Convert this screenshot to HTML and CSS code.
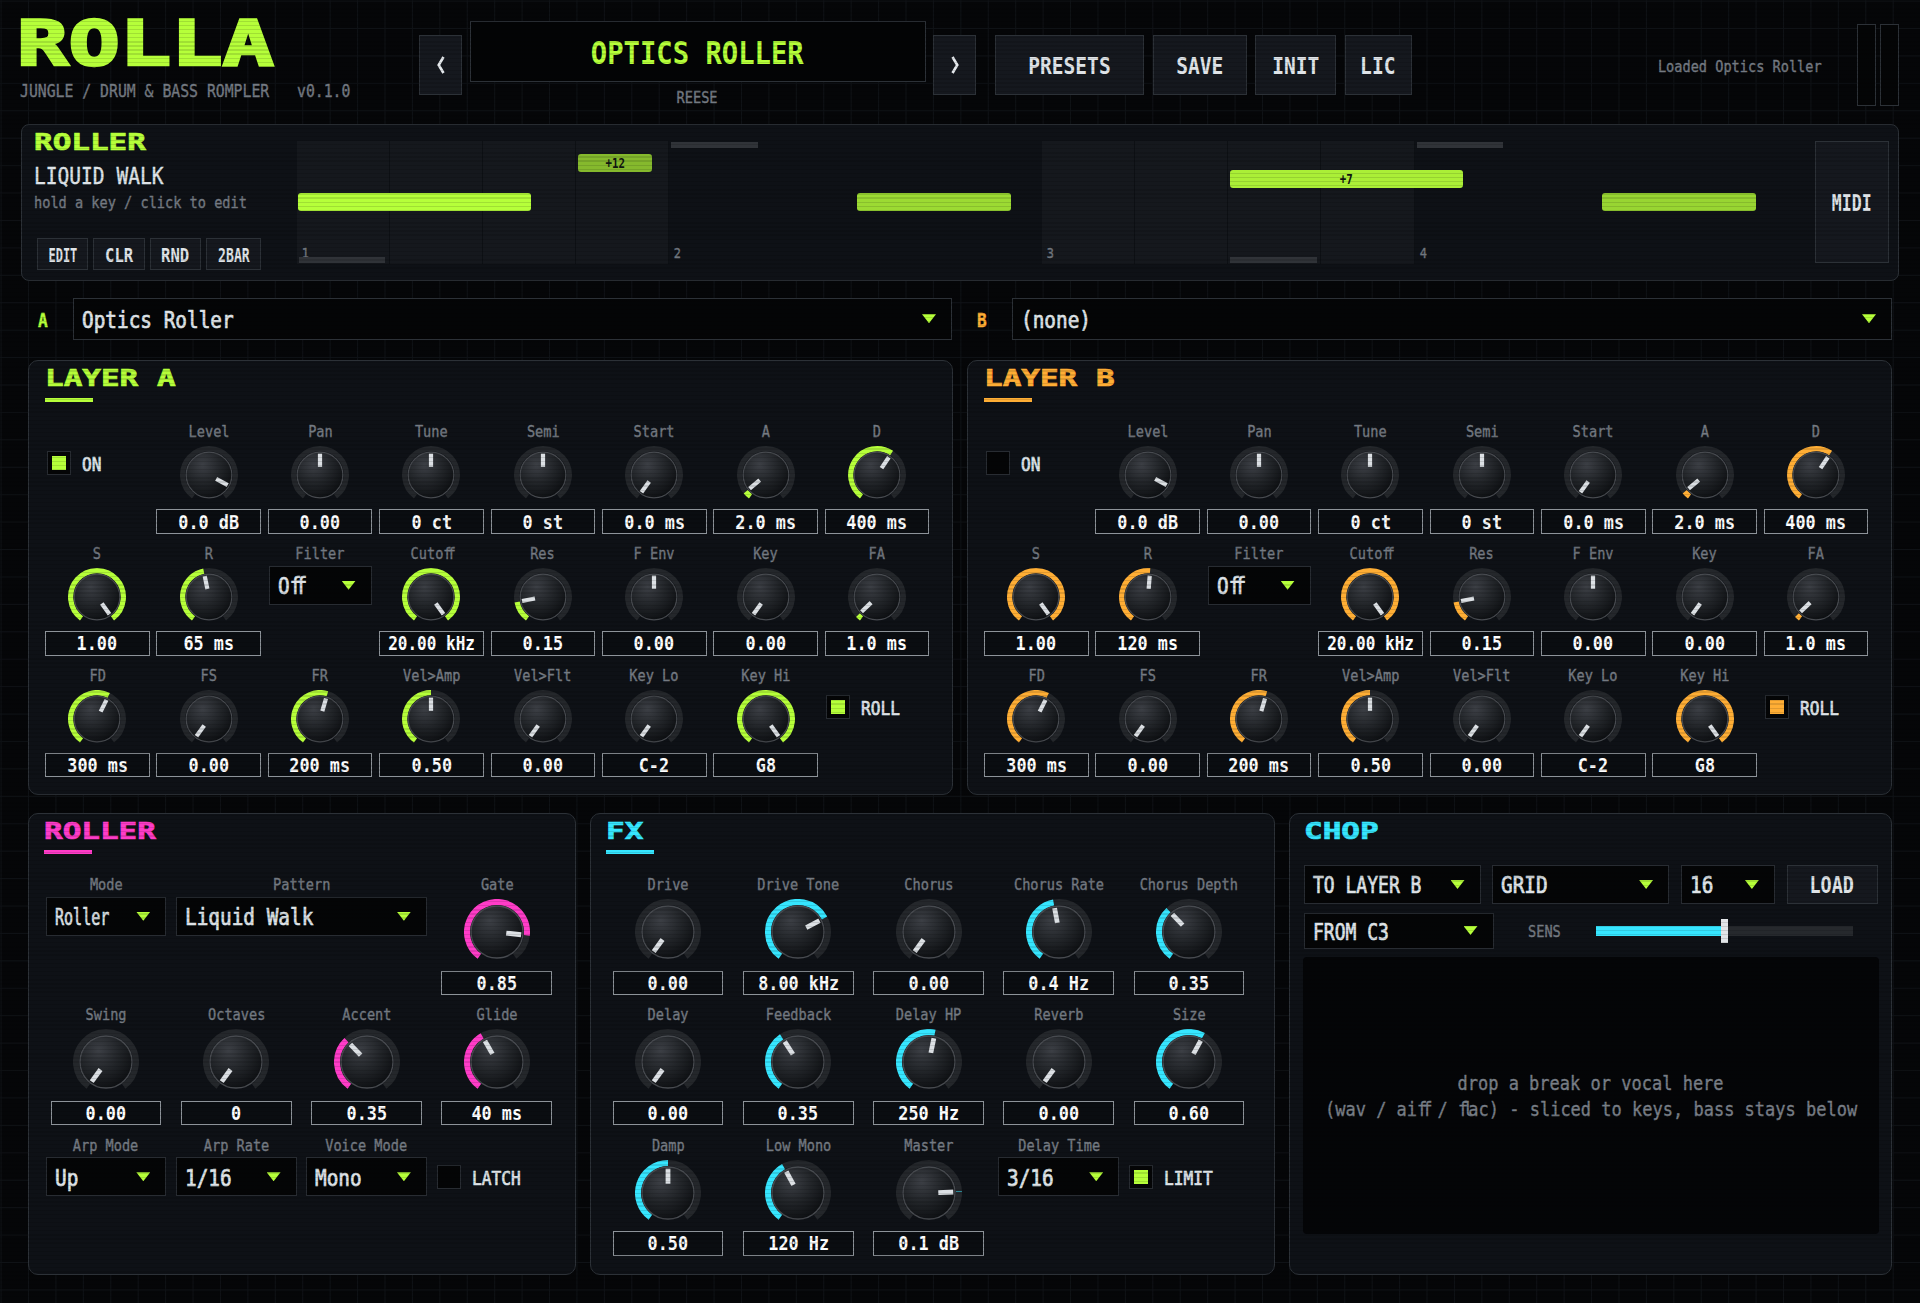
FILE: index.html
```html
<!DOCTYPE html>
<html lang="en">
<head>
  <meta charset="UTF-8">
  <meta name="viewport" content="width=device-width, initial-scale=1.0">
  <title>ROLLA</title>
  <link rel="stylesheet" href="styles.css">
</head>
<body>
  <svg class="defs" width="0" height="0">
    <defs>
      <radialGradient id="cap" cx="0.36" cy="0.28" r="0.8">
        <stop offset="0" stop-color="#3c3f45"/>
        <stop offset="0.5" stop-color="#222529"/>
        <stop offset="1" stop-color="#0b0d10"/>
      </radialGradient>
    </defs>
  </svg>

  <header class="header">
    <div class="brand">
      <h1><span class="wide">ROLLA</span></h1>
      <div class="tagline"><span class="t">JUNGLE / DRUM &amp; BASS ROMPLER</span><span class="t version">v0.1.0</span></div>
    </div>
    <button class="btn nav"><svg width="8" height="18" viewBox="0 0 8 18"><path d="M6.5 1 1.7 9l4.8 8"/></svg></button>
    <div class="display">
      <div class="preset-name"><span class="t">OPTICS ROLLER</span></div>
      <div class="preset-cat"><span class="t">REESE</span></div>
    </div>
    <button class="btn nav"><svg width="8" height="18" viewBox="0 0 8 18"><path d="M1.5 1 6.3 9l-4.8 8"/></svg></button>
    <div class="menu">
      <button class="btn presets"><span class="t">PRESETS</span></button>
      <button class="btn save"><span class="t">SAVE</span></button>
      <button class="btn init"><span class="t">INIT</span></button>
      <button class="btn lic"><span class="t">LIC</span></button>
    </div>
    <div class="status"><span class="t">Loaded Optics Roller</span></div>
    <div class="meters"><div class="meter"></div><div class="meter"></div></div>
  </header>

  <section class="panel strip">
    <div class="strip-info">
      <h2><span class="wide">ROLLER</span></h2>
      <div class="pattern-name"><span class="t">LIQUID WALK</span></div>
      <div class="hint"><span class="t">hold a key / click to edit</span></div>
      <div class="strip-buttons">
        <button class="btn small tight"><span class="t">EDIT</span></button>
        <button class="btn small"><span class="t">CLR</span></button>
        <button class="btn small"><span class="t">RND</span></button>
        <button class="btn small tight bar"><span class="t">2BAR</span></button>
      </div>
    </div>
    <div class="timeline" id="timeline"></div>
    <button class="btn midi"><span class="t">MIDI</span></button>
  </section>

  <div class="sources">
    <div class="source layer-a">
      <span class="source-id"><span class="t">A</span></span>
      <div class="select"><span class="t">Optics Roller</span><i class="arrow"></i></div>
    </div>
    <div class="source layer-b">
      <span class="source-id"><span class="t">B</span></span>
      <div class="select"><span class="t">(none)</span><i class="arrow"></i></div>
    </div>
  </div>

  <div class="layers">
    <section class="panel layer layer-a">
      <h2 class="ruled"><span class="wide">LAYER A</span></h2>
      <div class="controls" id="layerA"></div>
    </section>
    <section class="panel layer layer-b">
      <h2 class="ruled"><span class="wide">LAYER B</span></h2>
      <div class="controls" id="layerB"></div>
    </section>
  </div>

  <div class="bottom">
    <section class="panel unit roller">
      <h2 class="ruled"><span class="wide">ROLLER</span></h2>
      <div class="controls" id="roller"></div>
    </section>
    <section class="panel unit fx">
      <h2 class="ruled"><span class="wide">FX</span></h2>
      <div class="controls" id="fx"></div>
    </section>
    <section class="panel unit chop">
      <h2><span class="wide">CHOP</span></h2>
      <div class="chop-row">
        <div class="select target"><span class="t">TO LAYER B</span><i class="arrow"></i></div>
        <div class="select slicing"><span class="t">GRID</span><i class="arrow"></i></div>
        <div class="select slices"><span class="t">16</span><i class="arrow"></i></div>
        <button class="btn load"><span class="t">LOAD</span></button>
      </div>
      <div class="chop-row second">
        <div class="select from"><span class="t">FROM C3</span><i class="arrow"></i></div>
        <span class="sens"><span class="t">SENS</span></span>
        <div class="slider"><div class="slider-fill"></div><div class="slider-thumb"></div></div>
      </div>
      <div class="drop">
        <div><span class="t">drop a break or vocal here</span></div>
        <div><span class="t">(wav / ai<span class="lig">ff</span> / <span class="lig">fl</span>ac) - sliced to keys, bass stays below</span></div>
      </div>
    </section>
  </div>

  <script>
    const SWEEP = 144; // degrees either side of 12 o'clock

    function point(r, deg) {
      const a = deg * Math.PI / 180;
      return (r * Math.sin(a)).toFixed(2) + ' ' + (-r * Math.cos(a)).toFixed(2);
    }

    function arc(from, to, cls) {
      const large = to - from > 180 ? 1 : 0;
      return `<path class="${cls}" d="M${point(30, from)} A30 30 0 ${large} 1 ${point(30, to)}"/>`;
    }

    function ligatures(text) {
      return text.replace(/ff/g, '<span class="lig">ff</span>');
    }

    // knob: label, readout, position 0..1, optional arc start (bipolar knobs)
    function knob(label, value, pos, origin = 0) {
      const angle = -SWEEP + pos * SWEEP * 2;
      const start = -SWEEP + origin * SWEEP * 2;
      const fill = angle - start > 0.2 ? arc(start, angle, 'fill') : '';
      return `<div class="cell">
        <div class="name"><span class="t">${ligatures(label)}</span></div>
        <svg class="knob" viewBox="-33 -33 66 66">
          ${arc(-SWEEP, SWEEP, 'track')}${fill}
          <circle class="body" r="26"/>
          <rect class="pointer" x="-2.4" y="-24.3" width="4.8" height="15" transform="rotate(${angle.toFixed(1)})"/>
        </svg>
        <div class="value${value.length > 8 ? ' long' : ''}"><span class="t">${value}</span></div>
      </div>`;
    }

    function select(label, value, cls = '') {
      return `<div class="cell ${cls}">
        <div class="name"><span class="t">${label}</span></div>
        <div class="select"><span class="t">${ligatures(value)}</span><i class="arrow"></i></div>
      </div>`;
    }

    function toggle(label, on) {
      return `<div class="cell"><div class="toggle"><span class="box${on ? ' on' : ''}"></span><span class="t">${label}</span></div></div>`;
    }

    function layer(on, relPos, rel) {
      return [
        toggle('ON', on),
        knob('Level', '0.0 dB', 0.912, 0.912),
        knob('Pan', '0.00', 0.5, 0.5),
        knob('Tune', '0 ct', 0.5, 0.5),
        knob('Semi', '0 st', 0.5, 0.5),
        knob('Start', '0.0 ms', 0),
        knob('A', '2.0 ms', 0.05),
        knob('D', '400 ms', 0.617),
        knob('S', '1.00', 1),
        knob('R', rel, relPos),
        select('Filter', 'Off'),
        knob('Cutoff', '20.00 kHz', 1),
        knob('Res', '0.15', 0.15),
        knob('F Env', '0.00', 0.5, 0.5),
        knob('Key', '0.00', 0),
        knob('FA', '1.0 ms', 0.036),
        knob('FD', '300 ms', 0.592),
        knob('FS', '0.00', 0),
        knob('FR', '200 ms', 0.557),
        knob('Vel&gt;Amp', '0.50', 0.5),
        knob('Vel&gt;Flt', '0.00', 0),
        knob('Key Lo', 'C-2', 0),
        knob('Key Hi', 'G8', 1),
        toggle('ROLL', true)
      ].join('');
    }

    document.getElementById('layerA').innerHTML = layer(true, 0.46, '65 ms');
    document.getElementById('layerB').innerHTML = layer(false, 0.516, '120 ms');

    document.getElementById('roller').innerHTML = [
      select('Mode', 'Roller', 'squeeze'),
      select('Pattern', 'Liquid Walk', 'double'),
      knob('Gate', '0.85', 0.835),
      knob('Swing', '0.00', 0),
      knob('Octaves', '0', 0),
      knob('Accent', '0.35', 0.35),
      knob('Glide', '40 ms', 0.397),
      select('Arp Mode', 'Up'),
      select('Arp Rate', '1/16'),
      select('Voice Mode', 'Mono'),
      toggle('LATCH', false)
    ].join('');

    document.getElementById('fx').innerHTML = [
      knob('Drive', '0.00', 0),
      knob('Drive Tone', '8.00 kHz', 0.716),
      knob('Chorus', '0.00', 0),
      knob('Chorus Rate', '0.4 Hz', 0.464),
      knob('Chorus Depth', '0.35', 0.35),
      knob('Delay', '0.00', 0),
      knob('Feedback', '0.35', 0.385),
      knob('Delay HP', '250 Hz', 0.54),
      knob('Reverb', '0.00', 0),
      knob('Size', '0.60', 0.6),
      knob('Damp', '0.50', 0.5),
      knob('Low Mono', '120 Hz', 0.4),
      knob('Master', '0.1 dB', 0.804, 0.8),
      select('Delay Time', '3/16'),
      toggle('LIMIT', true)
    ].join('');

    // Sequencer: 16 steps, notes placed by step and length
    const notes = [
      { step: 0, len: 2.5, row: 'root', level: 1, label: '' },
      { step: 3, len: 0.8, row: 'octave', level: 0.7, label: '+12' },
      { step: 6, len: 1.65, row: 'root', level: 0.84, label: '' },
      { step: 10, len: 2.5, row: 'fifth', level: 0.93, label: '+7' },
      { step: 14, len: 1.65, row: 'root', level: 0.82, label: '' }
    ];
    const marks = [[0, 'low'], [4, 'high'], [10, 'low'], [12, 'high']];

    let html = '';
    for (let i = 0; i < 16; i++) {
      const beat = i % 4 === 0 ? `<span class="t">${i / 4 + 1}</span>` : '';
      html += `<div class="step${i % 8 < 4 ? ' lit' : ''}">${beat}</div>`;
    }
    marks.forEach(([step, pos]) => {
      html += `<div class="mark ${pos}" style="left:${step * 6.25}%"></div>`;
    });
    notes.forEach(n => {
      html += `<div class="note ${n.row}" style="left:${n.step * 6.25}%;width:${n.len * 6.25}%;--level:${n.level * 100}%"><span class="t">${n.label}</span></div>`;
    });
    document.getElementById('timeline').innerHTML = html;
  </script>
</body>
</html>
```
FILE: styles.css
```css
:root {
  --lime: #b6ff3a;
  --amber: #ffae35;
  --pink: #ff3cc8;
  --cyan: #36e6ff;
  --line: #2c3137;
  --dim: #747a82;
  --text: #dfe3e7;
  --squash: 0.85;
}
* {
  box-sizing: border-box;
}
body {
  margin: 0;
  position: relative;
  width: 1920px;
  height: 1303px;
  overflow: hidden;
  font-family: "DejaVu Sans Mono", "Liberation Mono", monospace;
  font-size: 16px;
  color: var(--text);
  background-color: #050608;
  background-image:
    linear-gradient(to right, #0f1216 1.3px, transparent 1.3px),
    linear-gradient(to bottom, #0f1216 1.3px, transparent 1.3px);
  background-size: 27.43px 27.43px;
  background-position: 0.6px 0.6px;
}
/* CRT scanlines over everything */
body::after {
  content: "";
  position: absolute;
  inset: 0;
  pointer-events: none;
  background: repeating-linear-gradient(to bottom, rgba(0, 0, 0, 0.12) 0, rgba(0, 0, 0, 0.12) 1.37px, transparent 1.37px, transparent 4.114px);
}
.defs {
  position: absolute;
}
.t {
  display: inline-block;
  white-space: pre;
  transform: translateY(1px) scaleX(var(--squash));
  -webkit-text-stroke: 0.4px currentColor;
}
.wide {
  display: inline-block;
  white-space: pre;
  transform: scaleX(1.33);
  transform-origin: left center;
}
.lig {
  letter-spacing: -0.301em;
}
.btn {
  display: flex;
  align-items: center;
  justify-content: center;
  flex: none;
  padding: 0;
  font-family: inherit;
  font-size: 23px;
  font-weight: bold;
  color: var(--text);
  background: #15181e;
  border: 1.4px solid #2c3137;
  border-radius: 0;
}
.btn .t, .value .t, .preset-name .t, .note .t {
  -webkit-text-stroke: 0;
}
.panel {
  background: #0e1116;
  border: 1.4px solid var(--line);
  border-radius: 10px;
}
h1, h2 {
  margin: 0;
  font-weight: bold;
}
h2 {
  font-size: 23.3px;
  line-height: 26px;
  -webkit-text-stroke: 0.7px currentColor;
}

/* header */
.header {
  display: flex;
  align-items: flex-start;
  height: 124px;
  padding-left: 20px;
}
.brand {
  width: 399px;
}
h1 {
  font-size: 63px;
  line-height: 64px;
  margin: 12px 0 0 -3.5px;
  color: var(--lime);
  -webkit-text-stroke: 2.5px var(--lime);
}
h1 .wide {
  transform: scaleX(1.355);
}
.tagline {
  display: flex;
  font-size: 17.4px;
  line-height: 20px;
  margin-top: 4px;
  color: var(--dim);
}
.tagline .t {
  transform-origin: left center;
  width: 277px;
}
.nav {
  width: 43px;
  height: 60px;
  margin-top: 35px;
}
.nav svg {
  fill: none;
  stroke: #e4e8ec;
  stroke-width: 2.6;
}
.display {
  width: 456px;
  margin: 21px 7.5px 0;
}
.preset-name {
  height: 61px;
  line-height: 60px;
  text-align: center;
  font-size: 32px;
  font-weight: bold;
  color: var(--lime);
  background: #030405;
  border: 1.4px solid var(--line);
}
.preset-cat {
  margin-top: 4px;
  line-height: 22px;
  text-align: center;
  color: var(--dim);
}
.menu {
  display: flex;
  gap: 8.7px;
  margin: 35px 0 0 19px;
  height: 60px;
}
.presets { width: 149px; }
.save { width: 94px; }
.init { width: 80.5px; }
.lic { width: 67px; }
.status {
  margin: 54px 35px 0 auto;
  line-height: 24px;
  color: var(--dim);
}
.status .t {
  transform-origin: right center;
}
.meters {
  display: flex;
  gap: 4px;
  margin: 24px 21.5px 0 0;
}
.meter {
  width: 19px;
  height: 82px;
  background: #040506;
  border: 1.4px solid var(--line);
}

/* roller strip */
.strip {
  display: flex;
  height: 157px;
  margin: 0 21px;
  border-radius: 8px;
}
.strip-info {
  width: 274.6px;
  padding: 4px 0 0 12px;
}
.strip h2 {
  color: var(--lime);
}
.strip-info .t {
  transform-origin: left center;
}
.pattern-name {
  font-size: 23px;
  line-height: 30px;
  margin-top: 5px;
}
.hint {
  line-height: 22px;
  margin-top: 1px;
  color: var(--dim);
}
.strip-buttons {
  display: flex;
  gap: 5.2px;
  margin: 25px 0 0 3px;
}
.btn.small {
  --squash: 0.82;
  width: 51.2px;
  height: 32px;
  font-size: 19px;
}
.btn.small .t {
  transform-origin: center;
}
.btn.small.tight {
  --squash: 0.63;
}
.btn.small.bar {
  --squash: 0.69;
  width: 55px;
}
.timeline {
  position: relative;
  display: grid;
  grid-template-columns: repeat(16, 1fr);
  width: 1490.6px;
  height: 123px;
  margin-top: 16px;
}
.step {
  display: flex;
  align-items: flex-end;
  padding: 0 0 3px 4px;
  font-size: 14px;
  line-height: 18px;
  color: #70767e;
}
.step.lit {
  background: #15181d;
  border-right: 1.4px solid #0d1014;
}
.mark {
  position: absolute;
  width: 86.5px;
  height: 5.6px;
  margin-left: 2px;
  background: #303338;
}
.mark.high { top: 1px; }
.mark.low { bottom: 1px; }
.note {
  --squash: 0.8;
  position: absolute;
  height: 18px;
  margin-left: 1.5px;
  line-height: 17px;
  text-align: center;
  font-size: 13.5px;
  font-weight: bold;
  color: #101510;
  background: color-mix(in srgb, var(--lime) var(--level), #12160f);
  border-radius: 3px;
}
.note.octave { top: 13px; }
.note.fifth { top: 29px; }
.note.root { top: 52.3px; }
.midi {
  --squash: 0.72;
  width: 74px;
  height: 122px;
  margin: 16px 0 0 27.8px;
}

/* dropdowns */
.select {
  display: flex;
  align-items: center;
  justify-content: space-between;
  height: 39.2px;
  padding: 0 15px 0 8px;
  font-size: 22.8px;
  background: #040506;
  border: 1.4px solid #282c32;
}
.select .t {
  transform-origin: left center;
  width: 0;
  -webkit-text-stroke: 0.7px currentColor;
}
.arrow {
  width: 14px;
  height: 9px;
  background: var(--lime);
  clip-path: polygon(0 0, 100% 0, 50% 100%);
}
.sources {
  display: grid;
  grid-template-columns: 924px 925px;
  gap: 15px;
  margin: 16.5px 0 0 28px;
}
.source {
  display: flex;
  align-items: center;
}
.source .select {
  flex: 1;
  height: 42.7px;
  border-color: var(--line);
}
.source-id {
  width: 45px;
  padding-left: 9.5px;
  font-size: 19px;
  font-weight: bold;
  color: var(--accent);
}
.source-id .t {
  transform-origin: left center;
}
.layer-a { --accent: var(--lime); }
.layer-b { --accent: var(--amber); }

/* panels with knobs */
.layers {
  display: grid;
  grid-template-columns: 925px 925px;
  gap: 14px;
  margin: 19.8px 0 0 28px;
}
.layer {
  height: 435.3px;
  padding: 4px 0 0 15.8px;
}
.layer h2, .unit h2 {
  color: var(--accent);
}
h2.ruled::after {
  content: "";
  display: block;
  width: 48px;
  height: 4px;
  margin-top: 6.6px;
  background: var(--accent);
}
.controls {
  display: grid;
}
.layer .controls {
  grid-template-columns: repeat(8, 111.4px);
  grid-auto-rows: 121.8px;
  margin: 10.4px 0 0 -3.2px;
}
.unit .controls {
  grid-auto-rows: 130.3px;
  margin: 10.4px 0 0 -3.6px;
}
.roller .controls { grid-template-columns: repeat(4, 130.3px); }
.fx .controls { grid-template-columns: repeat(5, 130.3px); }
.cell {
  display: flex;
  flex-direction: column;
  align-items: stretch;
  padding: 0 3.4px;
}
.double {
  grid-column: span 2;
}
.unit .cell {
  padding: 0 4.8px;
}
.name {
  height: 24px;
  margin-top: 7.2px;
  line-height: 23px;
  text-align: center;
  color: var(--dim);
  display: flex;
  justify-content: center;
}
.cell .select {
  margin-top: 0.6px;
}
.layer .cell .select {
  margin-left: 0.8px;
  margin-right: 0.8px;
}
.squeeze .select {
  --squash: 0.66;
}
.knob {
  width: 58px;
  height: 58px;
  margin: 3px auto 5.4px;
}
.unit .knob {
  width: 66px;
  height: 66px;
  margin-bottom: 5.8px;
}
.knob .track, .knob .fill {
  fill: none;
  stroke: #24272b;
  stroke-width: 6;
}
.knob .fill {
  stroke: var(--accent);
}
.knob .body {
  fill: url(#cap);
  stroke: #484b50;
  stroke-width: 1.4;
}
.knob .pointer {
  fill: #dce0e4;
}
.value {
  display: flex;
  align-items: center;
  justify-content: center;
  height: 24.3px;
  font-size: 19.8px;
  line-height: 20px;
  font-weight: bold;
  color: #fff;
  background: #0a0d11;
  border: 1.8px solid #8d9399;
}
.value.long {
  --squash: 0.81;
}
.unit .value {
  margin: 0 5px;
}
.toggle {
  display: flex;
  align-items: center;
  gap: 11px;
  margin: 39.2px 0 0 1.6px;
  font-size: 19px;
}
.toggle .t {
  transform-origin: left center;
  -webkit-text-stroke: 0.7px currentColor;
}
.unit .toggle {
  margin-left: 0.4px;
}
.box {
  width: 24px;
  height: 24px;
  padding: 4px;
  background: #040506;
  border: 1.4px solid #282c32;
}
.box.on::after {
  content: "";
  display: block;
  width: 14px;
  height: 14px;
  background: var(--accent);
}
.fx .box.on::after {
  background: var(--lime);
}

/* bottom row */
.bottom {
  display: grid;
  grid-template-columns: 548px 685px 602.6px;
  gap: 14px;
  margin: 17.5px 0 0 28px;
}
.unit {
  height: 462px;
  padding: 4px 0 0 15.4px;
}
.roller { --accent: var(--pink); }
.fx { --accent: var(--cyan); }
.chop { --accent: var(--cyan); padding-left: 14px; }
.chop-row {
  display: flex;
  align-items: center;
  gap: 11.8px;
  margin-top: 21px;
}
.chop-row.second {
  margin-top: 8.6px;
  gap: 0;
}
.target { width: 176.5px; --squash: 0.79; }
.slicing { width: 176.8px; }
.slices { width: 94px; }
.load { width: 91px; height: 39.2px; --squash: 0.8; }
.from { width: 189.5px; height: 36px; --squash: 0.79; }
.sens {
  width: 102px;
  padding-left: 34px;
  color: var(--dim);
}
.sens .t {
  transform-origin: left center;
}
.slider {
  position: relative;
  width: 257px;
  height: 10px;
  background: #26292d;
}
.slider-fill {
  width: 50%;
  height: 100%;
  background: var(--cyan);
}
.slider-thumb {
  position: absolute;
  left: 125px;
  top: -7px;
  width: 7px;
  height: 24px;
  background: #e2e5e8;
}
.drop {
  display: flex;
  flex-direction: column;
  align-items: center;
  justify-content: center;
  width: 576px;
  height: 277px;
  margin: 8px 0 0 -1px;
  font-size: 20px;
  line-height: 26px;
  color: #787e86;
  background: #040507;
  border-radius: 4px;
}
.drop div {
  display: flex;
  justify-content: center;
  width: 0;
}
```
